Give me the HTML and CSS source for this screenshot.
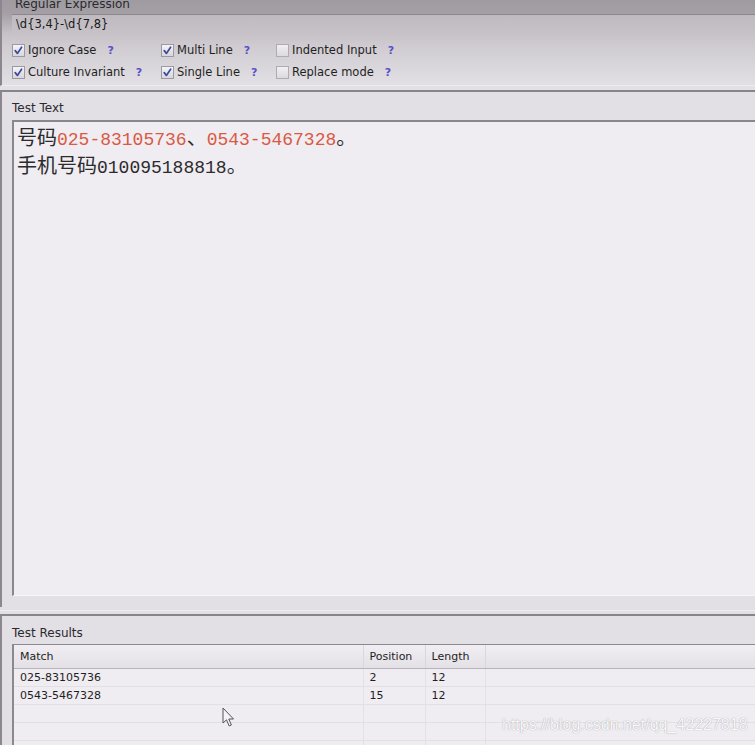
FILE: index.html
```html
<!DOCTYPE html>
<html>
<head>
<meta charset="utf-8">
<title>Regex Tester</title>
<link rel="stylesheet" href="styles.css">
</head>
<body>
<div class="app">
  <section class="regex-panel">
    <div class="caption caption-top">Regular Expression</div>
    <div class="regex-input">\d{3,4}-\d{7,8}</div>
    <div class="options">
      <div class="opt"><span class="cb"><svg viewBox="0 0 11 11"><path d="M2.2 5.6 L4.4 8.4 L8.6 2.2"/></svg></span><span>Ignore Case</span><span class="help">?</span></div>
      <div class="opt"><span class="cb"><svg viewBox="0 0 11 11"><path d="M2.2 5.6 L4.4 8.4 L8.6 2.2"/></svg></span><span>Multi Line</span><span class="help">?</span></div>
      <div class="opt"><span class="cb off"></span><span>Indented Input</span><span class="help">?</span></div>
      <div class="opt"><span class="cb"><svg viewBox="0 0 11 11"><path d="M2.2 5.6 L4.4 8.4 L8.6 2.2"/></svg></span><span>Culture Invariant</span><span class="help">?</span></div>
      <div class="opt"><span class="cb"><svg viewBox="0 0 11 11"><path d="M2.2 5.6 L4.4 8.4 L8.6 2.2"/></svg></span><span>Single Line</span><span class="help">?</span></div>
      <div class="opt"><span class="cb off"></span><span>Replace mode</span><span class="help">?</span></div>
    </div>
  </section>
  <div class="splitter"></div>
  <section class="panel text-panel">
    <div class="caption">Test Text</div>
    <div class="text-area">
      <div class="line">号码<span class="num hit">025-83105736</span>、<span class="num hit">0543-5467328</span>。</div>
      <div class="line">手机号码<span class="num plain">010095188818</span>。</div>
    </div>
  </section>
  <div class="splitter splitter-b"></div>
  <section class="panel results-panel">
    <div class="caption">Test Results</div>
    <div class="grid">
      <table>
        <colgroup><col class="c-match"><col class="c-pos"><col class="c-len"><col></colgroup>
        <thead>
          <tr><th>Match</th><th class="sep">Position</th><th class="sep">Length</th><th class="sep"></th></tr>
        </thead>
        <tbody>
          <tr><td>025-83105736</td><td class="sep">2</td><td class="sep">12</td><td class="sep"></td></tr>
          <tr><td>0543-5467328</td><td class="sep">15</td><td class="sep">12</td><td class="sep"></td></tr>
          <tr><td></td><td class="sep"></td><td class="sep"></td><td class="sep"></td></tr>
          <tr><td></td><td class="sep"></td><td class="sep"></td><td class="sep"></td></tr>
          <tr><td></td><td class="sep"></td><td class="sep"></td><td class="sep"></td></tr>
        </tbody>
      </table>
    </div>
  </section>
</div>
<svg class="cursor" viewBox="0 0 14 21"><path d="M1 1 L1 16 L4.5 12.8 L7.2 19 L9.4 18 L6.8 12 L11.5 12 Z"/></svg>
<div class="watermark">https://blog.csdn.net/qq_42227818</div>
</body>
</html>
```

FILE: styles.css
```css
* { box-sizing: border-box; margin: 0; padding: 0; }
html, body { width: 755px; height: 745px; overflow: hidden; }
body {
  background: #e2dfe5;
  font-family: "DejaVu Sans", Verdana, sans-serif;
  font-size: 11px;
  color: #1f1f22;
  position: relative;
}

.regex-panel {
  height: 86px;
  border-left: 2px solid #8b878d;
  border-bottom: 1px solid #eeebf1;
  background: linear-gradient(to bottom, #9f9ba1 0, #a4a0a6 14px, #c6c2c8 34px, #cfcbd1 46px, #e1dee4 84px);
  padding-left: 10px;
  overflow: hidden;
}
.caption { line-height: 14px; color: #2a2a2e; font-size: 12px; }
.caption-top { margin-top: -3px; height: 12px; padding-left: 3px; }
.regex-input {
  margin-top: 5px;
  height: 20px;
  border-top: 1px solid #8a868c;
  background: linear-gradient(to bottom, #bebac0, #c6c2c8);
  padding-left: 4px;
  line-height: 19px;
  font-size: 11.5px;
  color: #1a1a1a;
}
.options {
  margin-top: 8px;
  display: grid;
  grid-template-columns: 149px 115px auto;
  grid-auto-rows: 16px;
  row-gap: 6px;
  font-size: 11.5px;
}
.opt { display: flex; align-items: center; height: 16px; white-space: nowrap; }
.cb {
  width: 13px; height: 13px;
  border: 1px solid #9c99a1;
  background: linear-gradient(to bottom, #f6f4f8, #d8d5db);
  margin-right: 3px;
  display: flex; align-items: center; justify-content: center;
}
.cb.off { border-color: #aeabb2; background: linear-gradient(to bottom, #f1eff3, #dcd9df); }
.cb svg { width: 11px; height: 11px; }
.cb path { fill: none; stroke: #3c4c9c; stroke-width: 1.7; stroke-linecap: round; stroke-linejoin: round; }
.help { margin-left: 11px; color: #5652c8; font-weight: bold; font-size: 11px; }

.splitter { height: 4px; }
.splitter-b {
  height: 7px;
  background: linear-gradient(to bottom, transparent 0, transparent 3px, #eeebf1 3px, #eeebf1 4px, transparent 4px);
}

.panel {
  border-top: 2px solid #88848a;
  border-left: 2px solid #8b878d;
  padding-left: 10px;
}
.text-panel { padding-bottom: 11px; }
.text-panel .caption { padding-top: 9px; height: 23px; margin-bottom: 5px; }
.text-area {
  height: 476px;
  border-top: 2px solid #8a868c;
  border-left: 2px solid #8a868c;
  border-bottom: 1px solid #f7f5f9;
  background: #efecf2;
  padding: 1px 0 0 3px;
  font-family: "Noto Sans CJK SC", "Liberation Sans", sans-serif;
  font-size: 20px;
  color: #2b2b2b;
}
.line { line-height: 28px; height: 28px; white-space: nowrap; }
.num { font-family: "Liberation Mono", monospace; font-size: 18px; }
.num.hit { color: #d95a42; }
.num.plain { color: #2b2b2b; }

.results-panel { height: 131px; }
.results-panel .caption { padding-top: 10px; height: 24px; margin-bottom: 4px; }
.grid {
  height: 110px;
  border-top: 1px solid #8c888e;
  border-left: 2px solid #8c888e;
  background: #efecf2;
}
table { border-collapse: collapse; table-layout: fixed; width: 100%; }
.c-match { width: 349px; }
.c-pos { width: 62px; }
.c-len { width: 60px; }
th, td { text-align: left; font-weight: normal; padding: 0 0 0 6px; white-space: nowrap; color: #1f1f22; }
th {
  height: 23px;
  padding-top: 1px;
  background: linear-gradient(to bottom, #f0edf3, #e3e0e6);
  border-bottom: 1px solid #b6b3ba;
}
th.sep { border-left: 1px solid #d9d6dc; }
td { height: 18px; border-bottom: 1px solid #e2dfe5; }
td.sep { border-left: 1px solid #e3e0e6; }

.cursor {
  position: absolute;
  left: 222px; top: 707px;
  width: 14px; height: 21px;
}
.cursor path { fill: #f4f2f6; stroke: #55525a; stroke-width: 1; stroke-linejoin: round; }

.watermark {
  position: absolute;
  left: 502px; top: 715px;
  font-family: "Liberation Sans", Arial, sans-serif;
  font-size: 16px;
  line-height: 20px;
  color: rgba(255, 255, 255, 0.95);
  text-shadow: 0 0 1px rgba(120, 116, 126, 0.8);
  white-space: nowrap;
}
```
